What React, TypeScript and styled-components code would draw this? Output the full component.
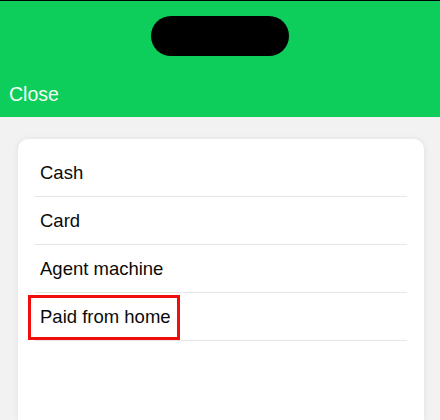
import React from "react";
import styled, { createGlobalStyle } from "styled-components";

const Global = createGlobalStyle`
  html, body { margin: 0; padding: 0; }
  body {
    background: #f2f2f2;
    font-family: "Liberation Sans", Arial, sans-serif;
    -webkit-font-smoothing: antialiased;
  }
`;

const Screen = styled.div`
  width: 440px;
  height: 420px;
  overflow: hidden;
  display: flex;
  flex-direction: column;
  background: #f2f2f2;
`;

const Header = styled.header`
  border-top: 1px solid #000;
  background: #0dce5b;
  height: 117px;
  box-sizing: border-box;
  display: flex;
  flex-direction: column;
  flex-shrink: 0;
`;

const Island = styled.div`
  align-self: center;
  margin-top: 15px;
  width: 138px;
  height: 40px;
  border-radius: 20px;
  background: #000;
`;

const CloseButton = styled.button`
  align-self: flex-start;
  margin-top: 26px;
  padding: 0 0 0 9px;
  border: none;
  background: transparent;
  color: #f4fff7;
  font-family: "Liberation Sans", Arial, sans-serif;
  font-size: 19.5px;
  line-height: 24px;
  cursor: pointer;
`;

const Card = styled.div`
  margin: 22px 16px 0 18px;
  flex: 1;
  background: #fff;
  border-radius: 10px 10px 0 0;
  box-shadow: 0 0 6px rgba(0, 0, 0, 0.08);
  padding: 10px 17px 0;
`;

const Row = styled.div`
  position: relative;
  height: 48px;
  box-sizing: border-box;
  border-bottom: 1px solid #e6e6e6;
  display: flex;
  align-items: center;
  padding-left: 5px;
  font-size: 18.5px;
  color: #0a0a0a;
`;

const Highlight = styled.div`
  position: absolute;
  left: -7px;
  top: 2px;
  width: 152px;
  height: 45px;
  box-sizing: border-box;
  border: 3px solid #f20d0d;
  pointer-events: none;
`;

const options = [
  { label: "Cash", marked: false },
  { label: "Card", marked: false },
  { label: "Agent machine", marked: false },
  { label: "Paid from home", marked: true },
];

export default function App() {
  return (
    <>
      <Global />
      <Screen>
        <Header>
          <Island />
          <CloseButton>Close</CloseButton>
        </Header>
        <Card>
          {options.map((o) => (
            <Row key={o.label}>
              {o.label}
              {o.marked && <Highlight />}
            </Row>
          ))}
        </Card>
      </Screen>
    </>
  );
}
